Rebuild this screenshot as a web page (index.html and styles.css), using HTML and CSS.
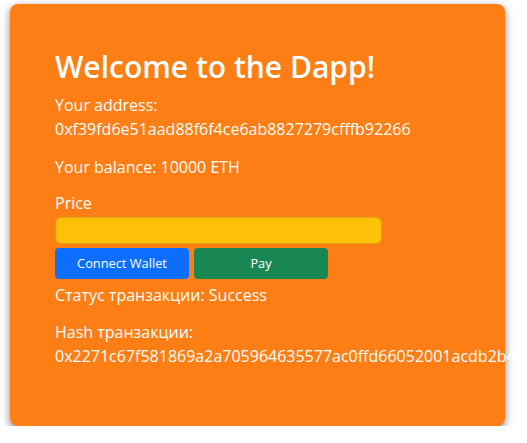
FILE: index.html
```html
<!DOCTYPE html>
<html lang="ru">
<head>
<meta charset="utf-8">
<title>Dapp</title>
<link rel="stylesheet" href="styles.css">
</head>
<body>
<div class="card">
  <h1 class="title">Welcome to the Dapp!</h1>
  <p class="info">Your address:<br>0xf39fd6e51aad88f6f4ce6ab8827279cfffb92266</p>
  <p class="info balance">Your balance: 10000 ETH</p>
  <label class="label" for="price">Price</label>
  <input class="price-input" id="price" type="text">
  <div class="actions">
    <button class="btn btn-blue" type="button">Connect Wallet</button>
    <button class="btn btn-green" type="button">Pay</button>
  </div>
  <p class="info status">Статус транзакции: Success</p>
  <p class="info hash">Hash транзакции:<br>0x2271c67f581869a2a705964635577ac0ffd66052001acdb2b42e9f0c3a17d85b</p>
</div>
</body>
</html>
```

FILE: styles.css
```css
html, body {
  margin: 0;
  padding: 0;
  background: #ffffff;
  overflow: hidden;
}

body {
  font-family: "Open Sans", "Noto Sans", sans-serif;
  font-size: 16px;
  line-height: 24px;
  color: #ffffff;
}

.card {
  box-sizing: border-box;
  width: 495px;
  height: 422px;
  margin: 4px 0 0 10px;
  padding: 45px 45px;
  background: #fd7e14;
  border-radius: 8px;
  box-shadow: 0 3px 9px rgba(0, 0, 0, 0.5);
}

.title {
  margin: 0 0 8px 0;
  font-size: 30px;
  line-height: 36px;
  font-weight: 600;
}

.info {
  margin: 0 0 14px 0;
  white-space: nowrap;
}

.balance {
  margin-bottom: 12px;
}

.label {
  display: block;
  margin-bottom: 2px;
}

.price-input {
  display: block;
  box-sizing: border-box;
  width: 327px;
  height: 27px;
  margin: 0 0 4px 0;
  padding: 0 10px;
  background: #ffc107;
  border: 1px solid #d9a40a;
  border-radius: 6px;
  outline: none;
  font: inherit;
}

.actions {
  display: flex;
  gap: 5px;
  margin-bottom: 4px;
}

.btn {
  box-sizing: border-box;
  width: 134px;
  height: 31px;
  padding: 0;
  border: none;
  border-radius: 4px;
  color: #ffffff;
  font-family: "Open Sans", "Noto Sans", sans-serif;
  font-size: 12.8px;
  line-height: 31px;
}

.btn-blue {
  background: #0d6efd;
}

.btn-green {
  background: #198754;
}

.status {
  margin-bottom: 13px;
}

.hash {
  margin: 0;
}
```
